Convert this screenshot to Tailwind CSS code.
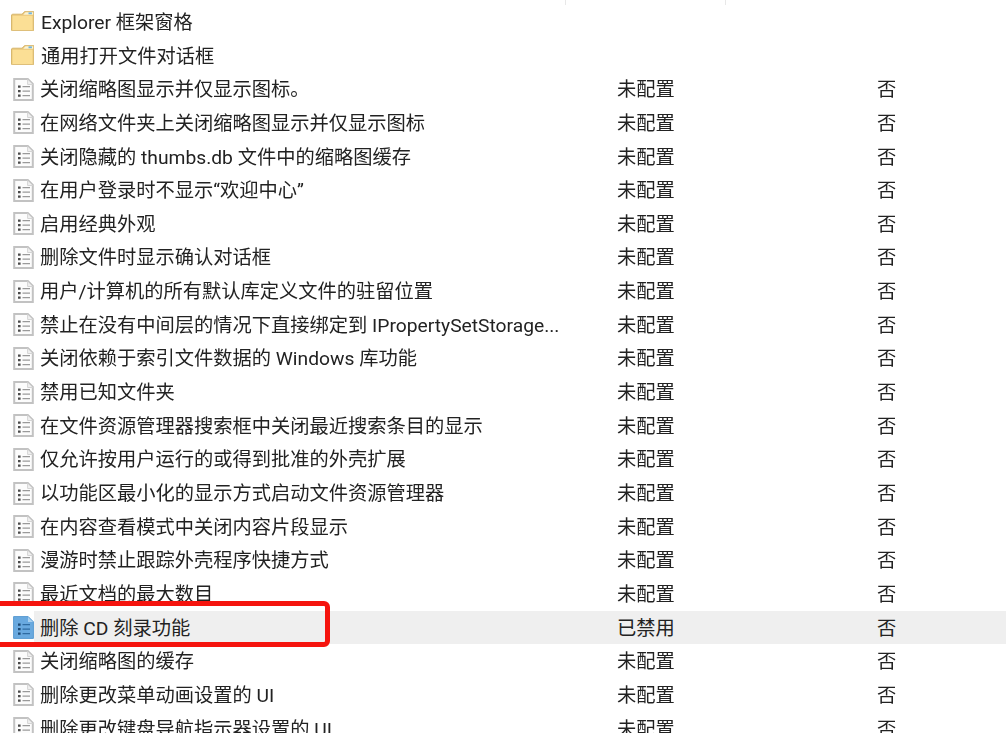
<!DOCTYPE html>
<html lang="zh-CN">
<head>
  <meta charset="UTF-8">
  <title>Policy list</title>
  <script src="https://cdn.jsdelivr.net/npm/@tailwindcss/browser@4"></script>
</head>
<body class="bg-white">
  <svg class="hidden">
    <symbol id="folder" viewBox="0 0 23 20">
      <path d="M.5 4V19a.8.8 0 0 0 .8.8h20.6a.8.8 0 0 0 .8-.8V1a.8.8 0 0 0-.8-.8H14L11 3.2H1.3z" fill="#e6c274" stroke="#d8b86e"/>
      <path d="M14.5 1.2h7.6v2.6h-10z" fill="#fbf3d2"/>
      <rect x="17.5" y="1.4" width="3.4" height="1.8" fill="#6fb3e0"/>
      <path d="M1.4 4.6h20.2v14.4H1.4z" fill="#fbdf95"/>
    </symbol>
    <symbol id="doc" viewBox="0 0 21 23">
      <path d="M1.2 1h13.6l5 5v16H1.2z" fill="#fcfcfc" stroke="#c2c2c2" stroke-width="2"/>
      <path d="M14.6 1.5v5h5" fill="#f0f0f0" stroke="#d4d4d4"/>
      <path d="M5 7.5h2.6v2.2H5zM5 12h2.6v2.2H5zM5 16.5h2.6v2.2H5z" fill="#4a4a4a"/>
      <path d="M9.5 8.6h7.5M9.5 13.1h7.5M9.5 17.6h7.5" stroke="#9a9a9a" stroke-width="1.2"/>
    </symbol>
    <symbol id="doc-on" viewBox="0 0 21 23">
      <path d="M.6.6h14.6l5.2 5.2v16.6H.6z" fill="#69a9df" stroke="#5a9bd2" stroke-width="1"/>
      <path d="M15 1v5h5" fill="#a9d0ef"/>
      <path d="M5 7.5h2.6v2.2H5zM5 12h2.6v2.2H5zM5 16.5h2.6v2.2H5z" fill="#1d4a75"/>
      <path d="M9.5 8.6h7.5M9.5 13.1h7.5M9.5 17.6h7.5" stroke="#2f6ba1" stroke-width="1.2"/>
    </symbol>
  </svg>

  <div class="relative w-[1006px] h-[733px] overflow-hidden text-[19.25px] text-[#222] [font-family:Roboto,'Noto_Sans_CJK_SC',sans-serif]">
    <div class="blur-[0.4px]">
      <div class="h-[5px] flex">
        <span class="ml-[565px] w-px h-[5px] bg-[#e8e8e8]"></span>
        <span class="ml-[159px] w-px h-[5px] bg-[#e8e8e8]"></span>
      </div>
      <div id="rows"></div>
    </div>
    <div class="absolute left-[-12px] top-[601px] w-[342px] h-[46px] border-[5px] border-[#f5140e] rounded-md blur-[0.4px]"></div>
  </div>

  <script>
    const folders = ['Explorer 框架窗格', '通用打开文件对话框'];
    const policies = [
      '关闭缩略图显示并仅显示图标。',
      '在网络文件夹上关闭缩略图显示并仅显示图标',
      '关闭隐藏的 thumbs.db 文件中的缩略图缓存',
      '在用户登录时不显示“欢迎中心”',
      '启用经典外观',
      '删除文件时显示确认对话框',
      '用户/计算机的所有默认库定义文件的驻留位置',
      '禁止在没有中间层的情况下直接绑定到 IPropertySetStorage...',
      '关闭依赖于索引文件数据的 Windows 库功能',
      '禁用已知文件夹',
      '在文件资源管理器搜索框中关闭最近搜索条目的显示',
      '仅允许按用户运行的或得到批准的外壳扩展',
      '以功能区最小化的显示方式启动文件资源管理器',
      '在内容查看模式中关闭内容片段显示',
      '漫游时禁止跟踪外壳程序快捷方式',
      '最近文档的最大数目',
      '删除 CD 刻录功能',
      '关闭缩略图的缓存',
      '删除更改菜单动画设置的 UI',
      '删除更改键盘导航指示器设置的 UI'
    ];

    const rows = document.getElementById('rows');
    let html = '';
    for (const name of folders) {
      html += `<div class="flex items-center h-[33.67px] pl-[11px]">
        <svg class="w-[23px] h-[20px] mr-[7px] -mt-px shrink-0"><use href="#folder"/></svg>
        <span class="whitespace-nowrap pt-[3px]">${name}</span>
      </div>`;
    }
    for (const name of policies) {
      const on = name.includes('CD');
      html += `<div class="flex items-center h-[33.67px] pl-[13px]">
        <svg class="w-[21px] h-[23px] shrink-0"><use href="#${on ? 'doc-on' : 'doc'}"/></svg>
        <div class="flex items-center flex-1 h-full pl-[6px] pt-[3px] ${on ? 'bg-[#efefef]' : ''}">
          <span class="w-[577px] whitespace-nowrap">${name}</span>
          <span class="w-[260px]">${on ? '已禁用' : '未配置'}</span>
          <span>否</span>
        </div>
      </div>`;
    }
    rows.innerHTML = html;
  </script>
</body>
</html>
